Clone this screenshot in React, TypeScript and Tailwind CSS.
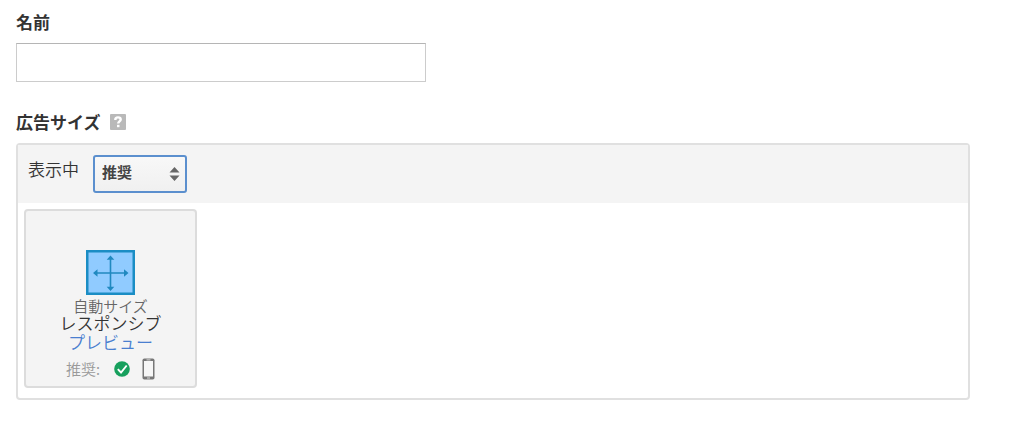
function ResponsiveIcon() {
  return (
    <svg width="49" height="45" viewBox="0 0 49 45" aria-hidden="true">
      <rect x="1.25" y="1.25" width="46.5" height="42.5" fill="#90cbff" stroke="#1b8dc4" strokeWidth="2.5" />
      <path d="M24.5 8v31M9 23h32" stroke="#2089c0" strokeWidth="1.6" fill="none" />
      <path
        d="M24.5 5.500l3.800 4.200h-7.600zM24.5 41l3.800-4.200h-7.600zM7 23l4.500-3.800v7.600zM42.500 23l-4.500-3.800v7.600z"
        fill="#2089c0"
      />
    </svg>
  );
}

function CheckIcon() {
  return (
    <svg width="16" height="16" viewBox="0 0 16 16" aria-hidden="true">
      <circle cx="8" cy="8" r="7.800" fill="#17a05d" />
      <path d="M3.800 8.200l3.200 3.300L12.700 4.500" fill="none" stroke="#fff" strokeWidth="1.900" />
    </svg>
  );
}

function PhoneIcon() {
  return (
    <svg width="13" height="22" viewBox="0 0 13 22" aria-hidden="true">
      <rect x="0.500" y="0.500" width="12" height="21" rx="1.800" fill="#777" />
      <rect x="2" y="3" width="9" height="15.500" fill="#f6f6f6" />
      <path d="M4.500 1.900h4M5 20h3" stroke="#e4e4e4" strokeWidth="0.900" />
    </svg>
  );
}

function HelpIcon() {
  return (
    <svg width="16" height="16" viewBox="0 0 16 16" aria-hidden="true">
      <rect width="16" height="16" rx="1" fill="#b9b9b9" />
      <path
        d="M5.300 5.900C5.300 4 6.500 3.400 8 3.400s2.700.7 2.700 2.100c0 1.800-2.500 1.900-2.500 4"
        fill="none"
        stroke="#fff"
        strokeWidth="2.400"
      />
      <rect x="7" y="10.800" width="2.500" height="2.400" fill="#fff" />
    </svg>
  );
}

export default function App() {
  return (
    <main className="bg-white pt-2 pr-[54px] pb-6 pl-4 font-['Noto_Sans_CJK_JP',sans-serif] text-[17px] leading-7 text-[#333]">
      <label htmlFor="ad-name" className="block font-bold">
        名前
      </label>
      <input
        id="ad-name"
        type="text"
        className="mt-[7px] block h-[39px] w-[410px] max-w-full border border-[#cccccc] border-t-[#b5b5b5] bg-white px-2 outline-none"
      />

      <div className="mt-[26px] flex items-center gap-[9px]">
        <h2 id="ad-size" className="font-bold">
          広告サイズ
        </h2>
        <button type="button" aria-label="ヘルプ">
          <HelpIcon />
        </button>
      </div>

      <section aria-labelledby="ad-size" className="mt-[7px] rounded-sm border-2 border-[#e0e0e0]">
        <div className="flex items-start gap-[14px] bg-[#f4f4f4] px-[10px] pt-[10px] pb-[10px]">
          <label htmlFor="filter" className="font-[350]">
            表示中
          </label>
          <div className="relative">
            <select
              id="filter"
              className="block h-[38px] w-[94px] appearance-none rounded-[3px] border-2 border-[#5b8fce] bg-linear-to-b from-[#f8f8f8] to-[#f0f0f0] pr-6 pb-[4px] pl-[7px] text-[15px] font-bold text-[#444] outline-none"
            >
              <option>推奨</option>
            </select>
            <svg
              className="pointer-events-none absolute top-3 right-[7px]"
              width="11"
              height="14"
              viewBox="0 0 11 14"
              aria-hidden="true"
            >
              <path d="M5.500 0L10.500 5.500H0.500zM5.500 14L10.500 8.500H0.500z" fill="#666" />
            </svg>
          </div>
        </div>

        <div className="px-[6px] pt-[6px] pb-[10px]">
          <article className="flex w-[173px] flex-col items-center rounded-sm border-2 border-[#dcdcdc] bg-[#f4f4f4] pt-[39px] pb-[5px] font-[350]">
            <ResponsiveIcon />
            <p className="mt-[3px] text-[15px] leading-4 text-[#666]">自動サイズ</p>
            <h3 className="leading-[18px]">レスポンシブ</h3>
            <a href="#preview" className="leading-[19px] text-[#4a7fd0]">
              プレビュー
            </a>
            <div className="mt-[6px] flex items-center">
              <span className="text-[15px] leading-6 text-[#999]">推奨:</span>
              <span className="ml-[14px]">
                <CheckIcon />
              </span>
              <span className="ml-[12px]">
                <PhoneIcon />
              </span>
            </div>
          </article>
        </div>
      </section>
    </main>
  );
}
